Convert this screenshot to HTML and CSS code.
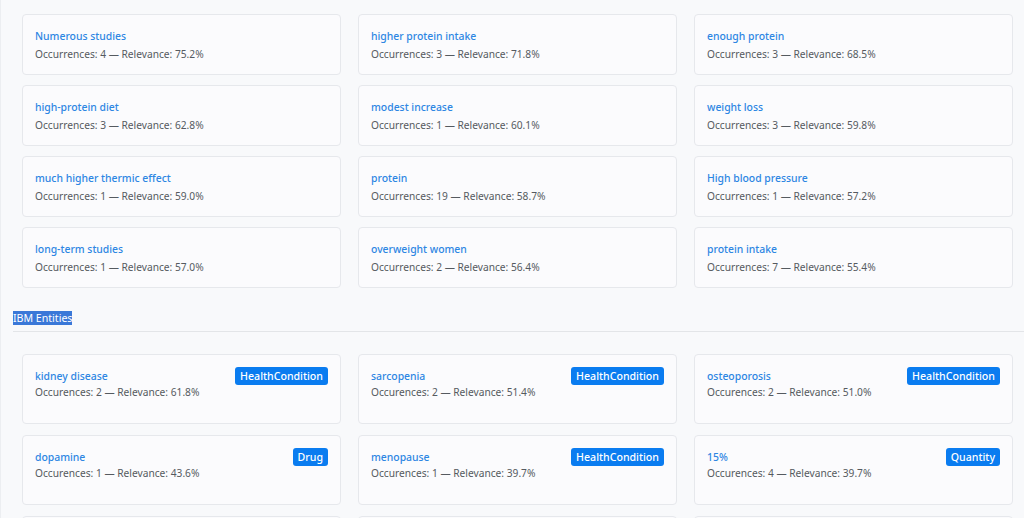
FILE: index.html
```html
<!DOCTYPE html>
<html>
<head>
<meta charset="utf-8">
<link rel="stylesheet" href="styles.css">
</head>
<body>
<div class="page">
  <div class="grid">
    <div class="card"><div class="name">Numerous studies</div><div class="meta">Occurrences: 4 — Relevance: 75.2%</div></div>
    <div class="card"><div class="name">higher protein intake</div><div class="meta">Occurrences: 3 — Relevance: 71.8%</div></div>
    <div class="card"><div class="name">enough protein</div><div class="meta">Occurrences: 3 — Relevance: 68.5%</div></div>
    <div class="card"><div class="name">high-protein diet</div><div class="meta">Occurrences: 3 — Relevance: 62.8%</div></div>
    <div class="card"><div class="name">modest increase</div><div class="meta">Occurrences: 1 — Relevance: 60.1%</div></div>
    <div class="card"><div class="name">weight loss</div><div class="meta">Occurrences: 3 — Relevance: 59.8%</div></div>
    <div class="card"><div class="name">much higher thermic effect</div><div class="meta">Occurrences: 1 — Relevance: 59.0%</div></div>
    <div class="card"><div class="name">protein</div><div class="meta">Occurrences: 19 — Relevance: 58.7%</div></div>
    <div class="card"><div class="name">High blood pressure</div><div class="meta">Occurrences: 1 — Relevance: 57.2%</div></div>
    <div class="card"><div class="name">long-term studies</div><div class="meta">Occurrences: 1 — Relevance: 57.0%</div></div>
    <div class="card"><div class="name">overweight women</div><div class="meta">Occurrences: 2 — Relevance: 56.4%</div></div>
    <div class="card"><div class="name">protein intake</div><div class="meta">Occurrences: 7 — Relevance: 55.4%</div></div>
  </div>

  <div class="section-head"><span class="sel">IBM Entities</span></div>

  <div class="grid grid-ent">
    <div class="card ent"><div class="row"><div class="name">kidney disease</div><span class="badge">HealthCondition</span></div><div class="meta">Occurences: 2 — Relevance: 61.8%</div></div>
    <div class="card ent"><div class="row"><div class="name">sarcopenia</div><span class="badge">HealthCondition</span></div><div class="meta">Occurences: 2 — Relevance: 51.4%</div></div>
    <div class="card ent"><div class="row"><div class="name">osteoporosis</div><span class="badge">HealthCondition</span></div><div class="meta">Occurences: 2 — Relevance: 51.0%</div></div>
    <div class="card ent"><div class="row"><div class="name">dopamine</div><span class="badge">Drug</span></div><div class="meta">Occurences: 1 — Relevance: 43.6%</div></div>
    <div class="card ent"><div class="row"><div class="name">menopause</div><span class="badge">HealthCondition</span></div><div class="meta">Occurences: 1 — Relevance: 39.7%</div></div>
    <div class="card ent"><div class="row"><div class="name">15%</div><span class="badge">Quantity</span></div><div class="meta">Occurences: 4 — Relevance: 39.7%</div></div>
    <div class="card ent"><div class="row"><div class="name">&nbsp;</div></div><div class="meta">&nbsp;</div></div>
    <div class="card ent"><div class="row"><div class="name">&nbsp;</div></div><div class="meta">&nbsp;</div></div>
    <div class="card ent"><div class="row"><div class="name">&nbsp;</div></div><div class="meta">&nbsp;</div></div>
  </div>
</div>
</body>
</html>
```

FILE: styles.css
```css
html, body {
  margin: 0;
  padding: 0;
  height: 100%;
  overflow: hidden;
}
body {
  background: #f8f9fb;
  font-family: "Noto Sans", "Open Sans", sans-serif;
  font-size: 10.2px;
  color: #555;
  border-left: 1px solid #eceef1;
  box-sizing: border-box;
}
.page {
  padding: 14px 11px 0 12px;
}
.grid {
  display: grid;
  grid-template-columns: repeat(3, 319px);
  column-gap: 17px;
  row-gap: 10px;
  padding-left: 9px;
}
.card {
  background: #fbfbfd;
  border: 1px solid #e6e8ec;
  border-radius: 4px;
  box-sizing: border-box;
  height: 61px;
  padding: 12px 12px 0 12px;
}
.name {
  color: #2d86e3;
  font-weight: 500;
  line-height: 18px;
  font-size: 10.4px;
}
.meta {
  line-height: 18px;
  color: #555a60;
  font-size: 10.2px;
}
.section-head {
  margin-top: 22px;
  padding-bottom: 5px;
  border-bottom: 1px solid #e3e5e8;
  line-height: 16px;
  margin-right: -11px;
}
.sel {
  background: #3a78d8;
  color: #fff;
  font-size: 10.6px;
}
.grid-ent {
  margin-top: 22px;
  row-gap: 11px;
}
.card.ent {
  height: 70px;
  padding-top: 12px;
}
.row {
  display: flex;
  justify-content: space-between;
  align-items: center;
  height: 18px;
}
.ent .meta {
  line-height: 15px;
}
.badge {
  background: #0a7cf0;
  color: #fff;
  border-radius: 3px;
  font-size: 10.6px;
  line-height: 18px;
  padding: 0 5px;
  font-weight: 500;
}
```
